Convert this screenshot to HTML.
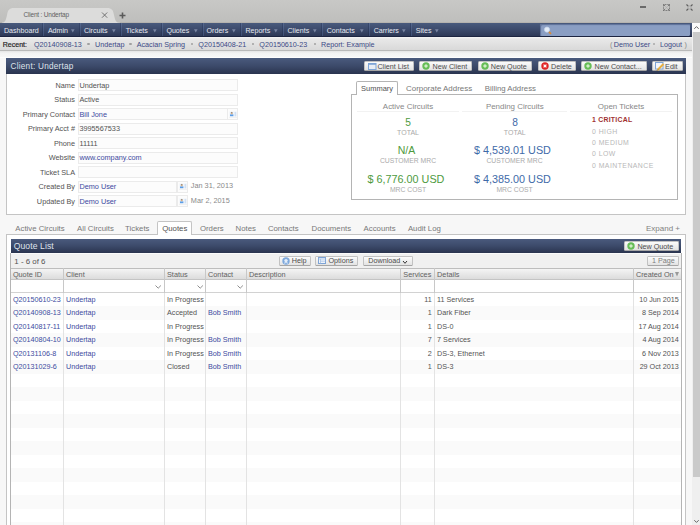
<!DOCTYPE html>
<html><head><meta charset="utf-8"><style>
html,body{margin:0;padding:0;width:700px;height:525px;overflow:hidden;background:#f4f4f4;}
body{position:relative;font-family:"Liberation Sans", sans-serif;}
body>div{position:absolute;}
.t{white-space:nowrap;}
svg{display:block;}
</style></head><body>
<div style="left:0px;top:0px;width:700px;height:23px;background:linear-gradient(#c8c8c6,#bebebc);"></div>
<svg style="position:absolute;left:0;top:0" width="140" height="23"><path d="M1 23 C5 23 6 20 7 15 C8 10 9 8 14 8 L107 8 C112 8 113 10 114 15 C115 20 116 23 120 23 Z" fill="#dcdcdb"/></svg>
<div class="t" style="left:23.5px;top:12px;font-size:6.5px;line-height:6.5px;color:#616161;font-weight:normal;letter-spacing:-0.2px;">Client : Undertap</div>
<svg style="position:absolute;left:100px;top:11px" width="9" height="9"><path d="M2 1.5 L7.2 6.7 M7.2 1.5 L2 6.7" stroke="#666" stroke-width="0.9"/></svg>
<svg style="position:absolute;left:118px;top:11px" width="9" height="9"><path d="M4.5 1.5 V7.5 M1.5 4.5 H7.5" stroke="#5a5a5a" stroke-width="1.6"/></svg>
<div style="left:640px;top:6px;width:6px;height:2px;background:#6a6a6a;"></div>
<svg style="position:absolute;left:662px;top:3px" width="9" height="9"><rect x="1.5" y="1.5" width="6" height="6" fill="none" stroke="#666" stroke-width="0.8" stroke-dasharray="1 0.6"/><path d="M1.5 1.5 L7.5 7.5 M7.5 1.5 L1.5 7.5" stroke="#aaa" stroke-width="0.6"/><path d="M1.5 1.5 L2.6 2.6 M7.5 1.5 L6.4 2.6 M1.5 7.5 L2.6 6.4 M7.5 7.5 L6.4 6.4" stroke="#555" stroke-width="1"/></svg>
<svg style="position:absolute;left:685px;top:3px" width="9" height="9"><path d="M1.5 1.5 L3.2 3.2 M7.5 1.5 L5.8 3.2 M1.5 7.5 L3.2 5.8 M7.5 7.5 L5.8 5.8" stroke="#555" stroke-width="1.1"/><rect x="3" y="3" width="3" height="3" fill="none" stroke="#999" stroke-width="0.6"/></svg>
<div style="left:0px;top:23px;width:692px;height:14px;background:linear-gradient(#495a7d,#3b496a 50%,#2b3653);"></div>
<div style="left:0px;top:36px;width:692px;height:1px;background:#1d2541;"></div>
<div style="left:120px;top:22px;width:572px;height:1px;background:#b5b3af;"></div>
<div style="left:0px;top:22px;width:2px;height:1px;background:#b5b3af;"></div>
<div style="left:42px;top:23px;width:1px;height:13px;background:linear-gradient(#3a4a70,#26324f);"></div>
<div style="left:43px;top:23px;width:1px;height:13px;background:linear-gradient(#56698f,#3e4e74);"></div>
<div style="left:79px;top:23px;width:1px;height:13px;background:linear-gradient(#3a4a70,#26324f);"></div>
<div style="left:80px;top:23px;width:1px;height:13px;background:linear-gradient(#56698f,#3e4e74);"></div>
<div style="left:120px;top:23px;width:1px;height:13px;background:linear-gradient(#3a4a70,#26324f);"></div>
<div style="left:121px;top:23px;width:1px;height:13px;background:linear-gradient(#56698f,#3e4e74);"></div>
<div style="left:161px;top:23px;width:1px;height:13px;background:linear-gradient(#3a4a70,#26324f);"></div>
<div style="left:162px;top:23px;width:1px;height:13px;background:linear-gradient(#56698f,#3e4e74);"></div>
<div style="left:202px;top:23px;width:1px;height:13px;background:linear-gradient(#3a4a70,#26324f);"></div>
<div style="left:203px;top:23px;width:1px;height:13px;background:linear-gradient(#56698f,#3e4e74);"></div>
<div style="left:240px;top:23px;width:1px;height:13px;background:linear-gradient(#3a4a70,#26324f);"></div>
<div style="left:241px;top:23px;width:1px;height:13px;background:linear-gradient(#56698f,#3e4e74);"></div>
<div style="left:282px;top:23px;width:1px;height:13px;background:linear-gradient(#3a4a70,#26324f);"></div>
<div style="left:283px;top:23px;width:1px;height:13px;background:linear-gradient(#56698f,#3e4e74);"></div>
<div style="left:321px;top:23px;width:1px;height:13px;background:linear-gradient(#3a4a70,#26324f);"></div>
<div style="left:322px;top:23px;width:1px;height:13px;background:linear-gradient(#56698f,#3e4e74);"></div>
<div style="left:368px;top:23px;width:1px;height:13px;background:linear-gradient(#3a4a70,#26324f);"></div>
<div style="left:369px;top:23px;width:1px;height:13px;background:linear-gradient(#56698f,#3e4e74);"></div>
<div style="left:410px;top:23px;width:1px;height:13px;background:linear-gradient(#3a4a70,#26324f);"></div>
<div style="left:411px;top:23px;width:1px;height:13px;background:linear-gradient(#56698f,#3e4e74);"></div>
<div class="t" style="left:4px;top:28px;font-size:7.1px;line-height:7.1px;color:#e6e9f0;font-weight:normal;">Dashboard</div>
<div class="t" style="left:47.9px;top:28px;font-size:7.1px;line-height:7.1px;color:#e6e9f0;font-weight:normal;">Admin</div>
<svg style="position:absolute;left:70.7px;top:29px" width="4" height="4"><path d="M0 0.2 H3.6 L1.8 3.4 Z" fill="#7a86a3"/></svg>
<div class="t" style="left:83.9px;top:28px;font-size:7.1px;line-height:7.1px;color:#e6e9f0;font-weight:normal;">Circuits</div>
<svg style="position:absolute;left:111.7px;top:29px" width="4" height="4"><path d="M0 0.2 H3.6 L1.8 3.4 Z" fill="#7a86a3"/></svg>
<div class="t" style="left:125.7px;top:28px;font-size:7.1px;line-height:7.1px;color:#e6e9f0;font-weight:normal;">Tickets</div>
<svg style="position:absolute;left:152.7px;top:29px" width="4" height="4"><path d="M0 0.2 H3.6 L1.8 3.4 Z" fill="#7a86a3"/></svg>
<div class="t" style="left:166.4px;top:28px;font-size:7.1px;line-height:7.1px;color:#e6e9f0;font-weight:normal;">Quotes</div>
<svg style="position:absolute;left:193.7px;top:29px" width="4" height="4"><path d="M0 0.2 H3.6 L1.8 3.4 Z" fill="#7a86a3"/></svg>
<div class="t" style="left:206.6px;top:28px;font-size:7.1px;line-height:7.1px;color:#e6e9f0;font-weight:normal;">Orders</div>
<svg style="position:absolute;left:231.7px;top:29px" width="4" height="4"><path d="M0 0.2 H3.6 L1.8 3.4 Z" fill="#7a86a3"/></svg>
<div class="t" style="left:245.4px;top:28px;font-size:7.1px;line-height:7.1px;color:#e6e9f0;font-weight:normal;">Reports</div>
<svg style="position:absolute;left:273.5px;top:29px" width="4" height="4"><path d="M0 0.2 H3.6 L1.8 3.4 Z" fill="#7a86a3"/></svg>
<div class="t" style="left:287.5px;top:28px;font-size:7.1px;line-height:7.1px;color:#e6e9f0;font-weight:normal;">Clients</div>
<svg style="position:absolute;left:312.7px;top:29px" width="4" height="4"><path d="M0 0.2 H3.6 L1.8 3.4 Z" fill="#7a86a3"/></svg>
<div class="t" style="left:326.7px;top:28px;font-size:7.1px;line-height:7.1px;color:#e6e9f0;font-weight:normal;">Contacts</div>
<svg style="position:absolute;left:359.7px;top:29px" width="4" height="4"><path d="M0 0.2 H3.6 L1.8 3.4 Z" fill="#7a86a3"/></svg>
<div class="t" style="left:373.7px;top:28px;font-size:7.1px;line-height:7.1px;color:#e6e9f0;font-weight:normal;">Carriers</div>
<svg style="position:absolute;left:401.7px;top:29px" width="4" height="4"><path d="M0 0.2 H3.6 L1.8 3.4 Z" fill="#7a86a3"/></svg>
<div class="t" style="left:415.7px;top:28px;font-size:7.1px;line-height:7.1px;color:#e6e9f0;font-weight:normal;">Sites</div>
<svg style="position:absolute;left:435.4px;top:29px" width="4" height="4"><path d="M0 0.2 H3.6 L1.8 3.4 Z" fill="#7a86a3"/></svg>
<div style="left:539.5px;top:24px;width:150px;height:11.5px;background:#8a9ec3;border-radius:1.5px;box-shadow:inset 1px 1px 1px #5d6f98;"></div>
<svg style="position:absolute;left:543px;top:25.5px" width="10" height="10"><circle cx="4" cy="3.6" r="2.6" fill="#e3ecf8" stroke="#c4d3ea" stroke-width="0.7"/><path d="M6 5.8 L8 7.8" stroke="#d68a38" stroke-width="1.7"/></svg>
<div style="left:0px;top:37px;width:692px;height:13px;background:linear-gradient(#f6f6f6,#e8e8e8 15%,#d9d9d9);"></div>
<div style="left:0px;top:50px;width:692px;height:1px;background:#b9b9b9;"></div>
<div class="t" style="left:2.8px;top:41px;font-size:7.0px;line-height:7.0px;color:#282828;font-weight:normal;-webkit-text-stroke:0.2px #222;">Recent:</div>
<div class="t" style="left:33.9px;top:41px;font-size:7.2px;line-height:7.2px;color:#3c4a86;font-weight:normal;">Q20140908-13</div>
<div class="t" style="left:95px;top:41px;font-size:7.2px;line-height:7.2px;color:#3c4a86;font-weight:normal;">Undertap</div>
<div class="t" style="left:136.7px;top:41px;font-size:7.2px;line-height:7.2px;color:#3c4a86;font-weight:normal;">Acacian Spring</div>
<div class="t" style="left:198.3px;top:41px;font-size:7.2px;line-height:7.2px;color:#3c4a86;font-weight:normal;">Q20150408-21</div>
<div class="t" style="left:259.3px;top:41px;font-size:7.2px;line-height:7.2px;color:#3c4a86;font-weight:normal;">Q20150610-23</div>
<div class="t" style="left:321px;top:41px;font-size:7.2px;line-height:7.2px;color:#3c4a86;font-weight:normal;">Report: Example</div>
<div style="left:87.3px;top:43px;width:2.4px;height:2.4px;background:#a0a0a0;border-radius:1.2px;"></div>
<div style="left:129.39999999999998px;top:43px;width:2.4px;height:2.4px;background:#a0a0a0;border-radius:1.2px;"></div>
<div style="left:190.5px;top:43px;width:2.4px;height:2.4px;background:#a0a0a0;border-radius:1.2px;"></div>
<div style="left:251.7px;top:43px;width:2.4px;height:2.4px;background:#a0a0a0;border-radius:1.2px;"></div>
<div style="left:313.7px;top:43px;width:2.4px;height:2.4px;background:#a0a0a0;border-radius:1.2px;"></div>
<div class="t" style="left:610px;top:41px;font-size:7.2px;line-height:7.2px;color:#888888;font-weight:normal;">(</div>
<div class="t" style="left:613.8px;top:41px;font-size:7.2px;line-height:7.2px;color:#3c4a86;font-weight:normal;">Demo User</div>
<div style="left:652.5px;top:43px;width:2.4px;height:2.4px;background:#a8a8a8;border-radius:1.2px;"></div>
<div class="t" style="left:660px;top:41px;font-size:7.2px;line-height:7.2px;color:#3c4a86;font-weight:normal;">Logout</div>
<div class="t" style="left:684.5px;top:41px;font-size:7.2px;line-height:7.2px;color:#888888;font-weight:normal;">)</div>
<div style="left:0px;top:51px;width:692px;height:474px;background:#f7f7f7;"></div>
<div style="left:0px;top:51px;width:692px;height:7px;background:linear-gradient(#e4e4e4,#f3f3f3 30%,#f8f8f8);"></div>
<div style="left:0px;top:57px;width:692px;height:1px;background:#fdfdfd;"></div>
<div style="left:692px;top:23px;width:8px;height:502px;background:#efefef;"></div>
<div style="left:692px;top:23px;width:8px;height:9px;background:#fafafa;"></div>
<svg style="position:absolute;left:693px;top:25px" width="7" height="5"><path d="M1.3 3.8 L3.5 1.6 L5.7 3.8" fill="none" stroke="#555" stroke-width="0.9"/></svg>
<div style="left:693px;top:32px;width:7px;height:445px;background:#cacaca;"></div>
<svg style="position:absolute;left:693px;top:519px" width="7" height="5"><path d="M1.3 1.2 L3.5 3.4 L5.7 1.2" fill="none" stroke="#555" stroke-width="0.9"/></svg>
<div style="left:6px;top:58px;width:680px;height:157px;background:#fff;box-sizing:border-box;border:1px solid #c4c4c4;border-top:none;"></div>
<div style="left:6px;top:58px;width:680px;height:16px;background:linear-gradient(#4a5a7d,#3c4a6a 50%,#2a344f);"></div>
<div class="t" style="left:10.5px;top:63px;font-size:8.2px;line-height:8.2px;color:#dfe3ec;font-weight:normal;letter-spacing:0.25px;">Client: Undertap</div>
<div style="left:356px;top:58px;width:330px;height:16px;background:linear-gradient(#4a5a7d,#3c4a6a 50%,#2a344f);"></div>
<div style="left:364.3px;top:60.8px;width:50.0px;height:10.400000000000006px;box-sizing:border-box;border:1px solid #c2c2c2;border-bottom-color:#a6a6a6;border-radius:1.5px;background:linear-gradient(#fbfbfb,#e3e3e3);"></div>
<svg style="position:absolute;left:367.8px;top:62.5px" width="9" height="7"><rect x="0.5" y="0.5" width="7.5" height="6" fill="#e8edf4" stroke="#7ea4d6" stroke-width="1"/><rect x="0.5" y="0.5" width="7.5" height="1.3" fill="#7ea4d6"/></svg>
<div class="t" style="left:377.40000000000003px;top:63px;font-size:7.2px;line-height:7.2px;color:#4c4c4c;font-weight:normal;">Client List</div>
<div style="left:419.4px;top:60.8px;width:52.700000000000045px;height:10.400000000000006px;box-sizing:border-box;border:1px solid #c2c2c2;border-bottom-color:#a6a6a6;border-radius:1.5px;background:linear-gradient(#fbfbfb,#e3e3e3);"></div>
<svg style="position:absolute;left:422.4px;top:62.0px" width="8" height="8"><circle cx="4" cy="4" r="3.7" fill="#66bd57"/><path d="M4 2.1 V5.9 M2.1 4 H5.9" stroke="#b9e4ad" stroke-width="1.3"/><circle cx="4" cy="4" r="0.8" fill="#f4fbf2"/></svg>
<div class="t" style="left:432.5px;top:63px;font-size:7.2px;line-height:7.2px;color:#4c4c4c;font-weight:normal;">New Client</div>
<div style="left:477.6px;top:60.8px;width:54.0px;height:10.400000000000006px;box-sizing:border-box;border:1px solid #c2c2c2;border-bottom-color:#a6a6a6;border-radius:1.5px;background:linear-gradient(#fbfbfb,#e3e3e3);"></div>
<svg style="position:absolute;left:480.6px;top:62.0px" width="8" height="8"><circle cx="4" cy="4" r="3.7" fill="#66bd57"/><path d="M4 2.1 V5.9 M2.1 4 H5.9" stroke="#b9e4ad" stroke-width="1.3"/><circle cx="4" cy="4" r="0.8" fill="#f4fbf2"/></svg>
<div class="t" style="left:490.70000000000005px;top:63px;font-size:7.2px;line-height:7.2px;color:#4c4c4c;font-weight:normal;">New Quote</div>
<div style="left:538px;top:60.8px;width:38.39999999999998px;height:10.400000000000006px;box-sizing:border-box;border:1px solid #c2c2c2;border-bottom-color:#a6a6a6;border-radius:1.5px;background:linear-gradient(#fbfbfb,#e3e3e3);"></div>
<svg style="position:absolute;left:541px;top:62.0px" width="8" height="8"><circle cx="4" cy="4" r="3.7" fill="#e02424"/><path d="M2.6 2.6 L5.4 5.4 M5.4 2.6 L2.6 5.4" stroke="#fff" stroke-width="1.2"/></svg>
<div class="t" style="left:551.1px;top:63px;font-size:7.2px;line-height:7.2px;color:#4c4c4c;font-weight:normal;">Delete</div>
<div style="left:581.4px;top:60.8px;width:65.20000000000005px;height:10.400000000000006px;box-sizing:border-box;border:1px solid #c2c2c2;border-bottom-color:#a6a6a6;border-radius:1.5px;background:linear-gradient(#fbfbfb,#e3e3e3);"></div>
<svg style="position:absolute;left:584.4px;top:62.0px" width="8" height="8"><circle cx="4" cy="4" r="3.7" fill="#66bd57"/><path d="M4 2.1 V5.9 M2.1 4 H5.9" stroke="#b9e4ad" stroke-width="1.3"/><circle cx="4" cy="4" r="0.8" fill="#f4fbf2"/></svg>
<div class="t" style="left:594.5px;top:63px;font-size:7.2px;line-height:7.2px;color:#4c4c4c;font-weight:normal;">New Contact...</div>
<div style="left:652px;top:60.8px;width:30.799999999999955px;height:10.400000000000006px;box-sizing:border-box;border:1px solid #c2c2c2;border-bottom-color:#a6a6a6;border-radius:1.5px;background:linear-gradient(#fbfbfb,#e3e3e3);"></div>
<svg style="position:absolute;left:655.3px;top:62.0px" width="10" height="9"><rect x="0.5" y="0.5" width="7.5" height="6.5" fill="#f3f6fb" stroke="#7ea4d6" stroke-width="1"/><path d="M2.5 8 L8.5 2" stroke="#e8b040" stroke-width="2"/><path d="M2 8.6 L3 7.6" stroke="#8a6a30" stroke-width="1"/></svg>
<div class="t" style="left:665.1px;top:63px;font-size:7.2px;line-height:7.2px;color:#4c4c4c;font-weight:normal;">Edit</div>
<div class="t" style="left:-325px;width:400px;text-align:right;top:82px;font-size:7.3px;line-height:7.3px;color:#535353;font-weight:normal;">Name</div>
<div style="left:78px;top:79.0px;width:160px;height:12px;box-sizing:border-box;border:1px solid #ebebeb;background:#fcfcfc;"></div>
<div class="t" style="left:79.4px;top:82px;font-size:7.3px;line-height:7.3px;color:#535353;font-weight:normal;">Undertap</div>
<div class="t" style="left:-325px;width:400px;text-align:right;top:96px;font-size:7.3px;line-height:7.3px;color:#535353;font-weight:normal;">Status</div>
<div style="left:78px;top:93.5px;width:160px;height:12px;box-sizing:border-box;border:1px solid #ebebeb;background:#fcfcfc;"></div>
<div class="t" style="left:79.4px;top:96px;font-size:7.3px;line-height:7.3px;color:#535353;font-weight:normal;">Active</div>
<div class="t" style="left:-325px;width:400px;text-align:right;top:111px;font-size:7.3px;line-height:7.3px;color:#535353;font-weight:normal;">Primary Contact</div>
<div style="left:78px;top:108.0px;width:160px;height:12px;box-sizing:border-box;border:1px solid #ebebeb;background:#fcfcfc;"></div>
<div style="left:227px;top:108.0px;width:11px;height:12px;box-sizing:border-box;border:1px solid #ebebeb;background:#fcfcfc;"></div>
<svg style="position:absolute;left:228.8px;top:110.5px" width="9" height="7"><rect x="0.2" y="0.5" width="7.6" height="5" fill="#f2f6fb"/><rect x="1" y="3.4" width="3.4" height="1.8" fill="#5a9de8"/><circle cx="2.7" cy="2.4" r="0.9" fill="#d8b088"/><path d="M1.7 1.9 Q2.7 1 3.7 1.9" stroke="#6a5a48" stroke-width="0.7" fill="none"/><rect x="5.6" y="0.9" width="1.6" height="4.4" fill="#d0e0f4"/><path d="M0.5 6.3 H7.5" stroke="#c8c8c8" stroke-width="0.5" stroke-dasharray="1 1"/></svg>
<div class="t" style="left:79.4px;top:111px;font-size:7.3px;line-height:7.3px;color:#3c4aa0;font-weight:normal;">Bill Jone</div>
<div class="t" style="left:-325px;width:400px;text-align:right;top:125px;font-size:7.3px;line-height:7.3px;color:#535353;font-weight:normal;">Primary Acct #</div>
<div style="left:78px;top:122.49999999999999px;width:160px;height:12px;box-sizing:border-box;border:1px solid #ebebeb;background:#fcfcfc;"></div>
<div class="t" style="left:79.4px;top:125px;font-size:7.3px;line-height:7.3px;color:#535353;font-weight:normal;">3995567533</div>
<div class="t" style="left:-325px;width:400px;text-align:right;top:140px;font-size:7.3px;line-height:7.3px;color:#535353;font-weight:normal;">Phone</div>
<div style="left:78px;top:137.0px;width:160px;height:12px;box-sizing:border-box;border:1px solid #ebebeb;background:#fcfcfc;"></div>
<div class="t" style="left:79.4px;top:140px;font-size:7.3px;line-height:7.3px;color:#535353;font-weight:normal;">11111</div>
<div class="t" style="left:-325px;width:400px;text-align:right;top:154px;font-size:7.3px;line-height:7.3px;color:#535353;font-weight:normal;">Website</div>
<div style="left:78px;top:151.5px;width:160px;height:12px;box-sizing:border-box;border:1px solid #ebebeb;background:#fcfcfc;"></div>
<div class="t" style="left:79.4px;top:154px;font-size:7.3px;line-height:7.3px;color:#3c4aa0;font-weight:normal;">www.company.com</div>
<div class="t" style="left:-325px;width:400px;text-align:right;top:169px;font-size:7.3px;line-height:7.3px;color:#535353;font-weight:normal;">Ticket SLA</div>
<div style="left:78px;top:166.0px;width:160px;height:12px;box-sizing:border-box;border:1px solid #ebebeb;background:#fcfcfc;"></div>
<div class="t" style="left:-325px;width:400px;text-align:right;top:183px;font-size:7.3px;line-height:7.3px;color:#535353;font-weight:normal;">Created By</div>
<div style="left:78px;top:180.5px;width:99px;height:12px;box-sizing:border-box;border:1px solid #ebebeb;background:#fcfcfc;"></div>
<div style="left:177px;top:180.5px;width:10.5px;height:12px;box-sizing:border-box;border:1px solid #ebebeb;background:#fcfcfc;"></div>
<svg style="position:absolute;left:178.5px;top:183.0px" width="9" height="7"><rect x="0.2" y="0.5" width="7.6" height="5" fill="#f2f6fb"/><rect x="1" y="3.4" width="3.4" height="1.8" fill="#5a9de8"/><circle cx="2.7" cy="2.4" r="0.9" fill="#d8b088"/><path d="M1.7 1.9 Q2.7 1 3.7 1.9" stroke="#6a5a48" stroke-width="0.7" fill="none"/><rect x="5.6" y="0.9" width="1.6" height="4.4" fill="#d0e0f4"/><path d="M0.5 6.3 H7.5" stroke="#c8c8c8" stroke-width="0.5" stroke-dasharray="1 1"/></svg>
<div class="t" style="left:190.8px;top:182px;font-size:7.3px;line-height:7.3px;color:#8a8a8a;font-weight:normal;">Jan 31, 2013</div>
<div class="t" style="left:79.4px;top:183px;font-size:7.3px;line-height:7.3px;color:#3c4aa0;font-weight:normal;">Demo User</div>
<div class="t" style="left:-325px;width:400px;text-align:right;top:198px;font-size:7.3px;line-height:7.3px;color:#535353;font-weight:normal;">Updated By</div>
<div style="left:78px;top:195.0px;width:99px;height:12px;box-sizing:border-box;border:1px solid #ebebeb;background:#fcfcfc;"></div>
<div style="left:177px;top:195.0px;width:10.5px;height:12px;box-sizing:border-box;border:1px solid #ebebeb;background:#fcfcfc;"></div>
<svg style="position:absolute;left:178.5px;top:197.5px" width="9" height="7"><rect x="0.2" y="0.5" width="7.6" height="5" fill="#f2f6fb"/><rect x="1" y="3.4" width="3.4" height="1.8" fill="#5a9de8"/><circle cx="2.7" cy="2.4" r="0.9" fill="#d8b088"/><path d="M1.7 1.9 Q2.7 1 3.7 1.9" stroke="#6a5a48" stroke-width="0.7" fill="none"/><rect x="5.6" y="0.9" width="1.6" height="4.4" fill="#d0e0f4"/><path d="M0.5 6.3 H7.5" stroke="#c8c8c8" stroke-width="0.5" stroke-dasharray="1 1"/></svg>
<div class="t" style="left:190.8px;top:197px;font-size:7.3px;line-height:7.3px;color:#8a8a8a;font-weight:normal;">Mar 2, 2015</div>
<div class="t" style="left:79.4px;top:198px;font-size:7.3px;line-height:7.3px;color:#3c4aa0;font-weight:normal;">Demo User</div>
<div style="left:351px;top:94px;width:327px;height:106px;box-sizing:border-box;border:1px solid #b4b4b4;background:#fff;"></div>
<div style="left:356.4px;top:81.4px;width:42px;height:13.6px;box-sizing:border-box;border:1px solid #b4b4b4;border-bottom:none;border-radius:2px 2px 0 0;background:#fff;"></div>
<div class="t" style="left:361px;top:85px;font-size:7.5px;line-height:7.5px;color:#535353;font-weight:normal;">Summary</div>
<div class="t" style="left:406px;top:85px;font-size:7.95px;line-height:7.95px;color:#777777;font-weight:normal;">Corporate Address</div>
<div class="t" style="left:484.8px;top:85px;font-size:7.8px;line-height:7.8px;color:#777777;font-weight:normal;">Billing Address</div>
<div class="t" style="left:208px;width:400px;text-align:center;top:103px;font-size:7.95px;line-height:7.95px;color:#888888;font-weight:normal;">Active Circuits</div>
<div class="t" style="left:314.79999999999995px;width:400px;text-align:center;top:103px;font-size:7.95px;line-height:7.95px;color:#888888;font-weight:normal;">Pending Circuits</div>
<div class="t" style="left:421px;width:400px;text-align:center;top:103px;font-size:7.95px;line-height:7.95px;color:#888888;font-weight:normal;">Open Tickets</div>
<div style="left:357px;top:111px;width:102px;height:1px;background:#f2f2f2;"></div>
<div style="left:462px;top:111px;width:105px;height:1px;background:#f2f2f2;"></div>
<div style="left:570px;top:111px;width:102px;height:1px;background:#f2f2f2;"></div>
<div class="t" style="left:208px;width:400px;text-align:center;top:118px;font-size:10.2px;line-height:10.2px;color:#4e9a3e;font-weight:normal;">5</div>
<div class="t" style="left:315px;width:400px;text-align:center;top:118px;font-size:10.2px;line-height:10.2px;color:#3e6aa8;font-weight:normal;">8</div>
<div class="t" style="left:208px;width:400px;text-align:center;top:129px;font-size:7.0px;line-height:7.0px;color:#aaaaaa;font-weight:normal;">TOTAL</div>
<div class="t" style="left:314.79999999999995px;width:400px;text-align:center;top:129px;font-size:7.0px;line-height:7.0px;color:#aaaaaa;font-weight:normal;">TOTAL</div>
<div class="t" style="left:206.5px;width:400px;text-align:center;top:145px;font-size:10.5px;line-height:10.5px;color:#4e9a3e;font-weight:normal;">N/A</div>
<div class="t" style="left:312.5px;width:400px;text-align:center;top:145px;font-size:10.8px;line-height:10.8px;color:#3e6aa8;font-weight:normal;">$ 4,539.01 USD</div>
<div class="t" style="left:208px;width:400px;text-align:center;top:158px;font-size:6.8px;line-height:6.8px;color:#aaaaaa;font-weight:normal;">CUSTOMER MRC</div>
<div class="t" style="left:314.5px;width:400px;text-align:center;top:158px;font-size:6.8px;line-height:6.8px;color:#aaaaaa;font-weight:normal;">CUSTOMER MRC</div>
<div class="t" style="left:206px;width:400px;text-align:center;top:174px;font-size:10.8px;line-height:10.8px;color:#4e9a3e;font-weight:normal;">$ 6,776.00 USD</div>
<div class="t" style="left:312.5px;width:400px;text-align:center;top:174px;font-size:10.8px;line-height:10.8px;color:#3e6aa8;font-weight:normal;">$ 4,385.00 USD</div>
<div class="t" style="left:208px;width:400px;text-align:center;top:187px;font-size:6.8px;line-height:6.8px;color:#aaaaaa;font-weight:normal;">MRC COST</div>
<div class="t" style="left:314.5px;width:400px;text-align:center;top:187px;font-size:6.8px;line-height:6.8px;color:#aaaaaa;font-weight:normal;">MRC COST</div>
<div class="t" style="left:592px;top:117px;font-size:6.9px;line-height:6.9px;color:#a03030;font-weight:bold;letter-spacing:0.25px;">1 CRITICAL</div>
<div class="t" style="left:592px;top:129px;font-size:6.9px;line-height:6.9px;color:#b8b8b8;font-weight:normal;letter-spacing:0.45px;">0 HIGH</div>
<div class="t" style="left:592px;top:140px;font-size:6.9px;line-height:6.9px;color:#b8b8b8;font-weight:normal;letter-spacing:0.45px;">0 MEDIUM</div>
<div class="t" style="left:592px;top:151px;font-size:6.9px;line-height:6.9px;color:#b8b8b8;font-weight:normal;letter-spacing:0.45px;">0 LOW</div>
<div class="t" style="left:592px;top:163px;font-size:6.9px;line-height:6.9px;color:#b8b8b8;font-weight:normal;letter-spacing:0.45px;">0 MAINTENANCE</div>
<div style="left:6px;top:234px;width:680px;height:291px;box-sizing:border-box;border:1px solid #c4c4c4;border-bottom:none;background:#fff;"></div>
<div style="left:157.1px;top:221.4px;width:35px;height:13.6px;box-sizing:border-box;border:1px solid #c4c4c4;border-bottom:none;border-radius:2px 2px 0 0;background:#fff;"></div>
<div class="t" style="left:15.3px;top:225px;font-size:7.8px;line-height:7.8px;color:#777777;font-weight:normal;">Active Circuits</div>
<div class="t" style="left:77px;top:225px;font-size:7.8px;line-height:7.8px;color:#777777;font-weight:normal;">All Circuits</div>
<div class="t" style="left:125.1px;top:225px;font-size:7.8px;line-height:7.8px;color:#777777;font-weight:normal;">Tickets</div>
<div class="t" style="left:162.2px;top:225px;font-size:7.8px;line-height:7.8px;color:#535353;font-weight:normal;">Quotes</div>
<div class="t" style="left:199.9px;top:225px;font-size:7.8px;line-height:7.8px;color:#777777;font-weight:normal;">Orders</div>
<div class="t" style="left:235.5px;top:225px;font-size:7.8px;line-height:7.8px;color:#777777;font-weight:normal;">Notes</div>
<div class="t" style="left:267.9px;top:225px;font-size:7.8px;line-height:7.8px;color:#777777;font-weight:normal;">Contacts</div>
<div class="t" style="left:311.6px;top:225px;font-size:7.8px;line-height:7.8px;color:#777777;font-weight:normal;">Documents</div>
<div class="t" style="left:363.6px;top:225px;font-size:7.8px;line-height:7.8px;color:#777777;font-weight:normal;">Accounts</div>
<div class="t" style="left:407.9px;top:225px;font-size:7.8px;line-height:7.8px;color:#777777;font-weight:normal;">Audit Log</div>
<div class="t" style="left:280px;width:400px;text-align:right;top:225px;font-size:8.0px;line-height:8.0px;color:#818181;font-weight:normal;">Expand +</div>
<div style="left:10.5px;top:238.6px;width:670.7px;height:14.4px;background:linear-gradient(#4a5a7d,#3c4a6a 50%,#2a344f);"></div>
<div class="t" style="left:13.7px;top:242px;font-size:8.6px;line-height:8.6px;color:#dfe3ec;font-weight:normal;letter-spacing:0.1px;">Quote List</div>
<div style="left:624.3px;top:240.7px;width:54.700000000000045px;height:10.300000000000011px;box-sizing:border-box;border:1px solid #c2c2c2;border-bottom-color:#a6a6a6;border-radius:1.5px;background:linear-gradient(#fbfbfb,#e3e3e3);"></div>
<svg style="position:absolute;left:627.3px;top:241.85px" width="8" height="8"><circle cx="4" cy="4" r="3.7" fill="#66bd57"/><path d="M4 2.1 V5.9 M2.1 4 H5.9" stroke="#b9e4ad" stroke-width="1.3"/><circle cx="4" cy="4" r="0.8" fill="#f4fbf2"/></svg>
<div class="t" style="left:637.4px;top:243px;font-size:7.2px;line-height:7.2px;color:#4c4c4c;font-weight:normal;">New Quote</div>
<div style="left:10.5px;top:253px;width:670.7px;height:14.6px;background:#f0f0f0;"></div>
<div style="left:10.5px;top:253px;width:670.7px;height:1px;background:#fafafa;"></div>
<div class="t" style="left:14.3px;top:258px;font-size:7.9px;line-height:7.9px;color:#535353;font-weight:normal;">1 - 6 of 6</div>
<div style="left:278.7px;top:255.6px;width:31.900000000000034px;height:10.000000000000028px;box-sizing:border-box;border:1px solid #c2c2c2;border-bottom-color:#a6a6a6;border-radius:1.5px;background:linear-gradient(#fbfbfb,#e3e3e3);"></div>
<svg style="position:absolute;left:281.7px;top:256.6px" width="8" height="8"><circle cx="4" cy="4" r="3.7" fill="#7da8dc"/><circle cx="4" cy="3.6" r="1.7" fill="#e4eef9"/><path d="M2 6.2 Q4 4.8 6 6.2" stroke="#e4eef9" stroke-width="0.9" fill="none"/></svg>
<div class="t" style="left:291.8px;top:257px;font-size:7.2px;line-height:7.2px;color:#4c4c4c;font-weight:normal;">Help</div>
<div style="left:315.4px;top:255.6px;width:42.400000000000034px;height:10.000000000000028px;box-sizing:border-box;border:1px solid #c2c2c2;border-bottom-color:#a6a6a6;border-radius:1.5px;background:linear-gradient(#fbfbfb,#e3e3e3);"></div>
<svg style="position:absolute;left:318.4px;top:257.1px" width="9" height="7"><rect x="0.5" y="0.5" width="7" height="6" fill="#eef3fb" stroke="#7ea4d6" stroke-width="1"/><path d="M0.5 2 H7.5 M2.5 2 V6.5 M2.5 4.2 H7.5" stroke="#9dbbe2" stroke-width="0.7"/></svg>
<div class="t" style="left:328.5px;top:257px;font-size:7.2px;line-height:7.2px;color:#4c4c4c;font-weight:normal;">Options</div>
<div style="left:363.1px;top:255.6px;width:50.39999999999998px;height:10.000000000000028px;box-sizing:border-box;border:1px solid #c2c2c2;border-bottom-color:#a6a6a6;border-radius:1.5px;background:linear-gradient(#fbfbfb,#e3e3e3);"></div>
<div class="t" style="left:368.3px;top:257px;font-size:7.2px;line-height:7.2px;color:#4c4c4c;font-weight:normal;">Download</div>
<svg style="position:absolute;left:402px;top:260px" width="6" height="5"><path d="M1 1 L3 3.3 L5 1" fill="none" stroke="#333" stroke-width="1"/></svg>
<div style="left:647.4px;top:255.6px;width:31.600000000000023px;height:10.000000000000028px;box-sizing:border-box;border:1px solid #c2c2c2;border-bottom-color:#a6a6a6;border-radius:1.5px;background:linear-gradient(#fbfbfb,#e3e3e3);"></div>
<div class="t" style="left:651.9px;top:257px;font-size:7.2px;line-height:7.2px;color:#7e7e7e;font-weight:normal;">1 Page</div>
<div style="left:10.5px;top:267.6px;width:670.7px;height:12px;background:linear-gradient(#f4f4f4,#dcdcdc);border-top:1px solid #bdbdbd;border-bottom:1px solid #c4c4c4;box-sizing:border-box;"></div>
<div style="left:10.5px;top:279.6px;width:670.7px;height:245.4px;background:#fff;"></div>
<div style="left:10.5px;top:306.0px;width:670.7px;height:13.5px;background:#fafafa;"></div>
<div style="left:10.5px;top:333.0px;width:670.7px;height:13.5px;background:#fafafa;"></div>
<div style="left:10.5px;top:360.0px;width:670.7px;height:13.5px;background:#fafafa;"></div>
<div style="left:10.5px;top:387.0px;width:670.7px;height:13.5px;background:#fafafa;"></div>
<div style="left:10.5px;top:414.0px;width:670.7px;height:13.5px;background:#fafafa;"></div>
<div style="left:10.5px;top:441.0px;width:670.7px;height:13.5px;background:#fafafa;"></div>
<div style="left:10.5px;top:468.0px;width:670.7px;height:13.5px;background:#fafafa;"></div>
<div style="left:10.5px;top:495.0px;width:670.7px;height:13.5px;background:#fafafa;"></div>
<div style="left:10.5px;top:522.0px;width:670.7px;height:13.5px;background:#fafafa;"></div>
<div style="left:10.5px;top:292px;width:670.7px;height:1px;background:#d2d2d2;"></div>
<div style="left:62.8px;top:267.6px;width:1px;height:257.4px;background:#e3e3e3;"></div>
<div style="left:62.8px;top:267.6px;width:1px;height:25px;background:#c8c8c8;"></div>
<div style="left:163.9px;top:267.6px;width:1px;height:257.4px;background:#e3e3e3;"></div>
<div style="left:163.9px;top:267.6px;width:1px;height:25px;background:#c8c8c8;"></div>
<div style="left:205.1px;top:267.6px;width:1px;height:257.4px;background:#e3e3e3;"></div>
<div style="left:205.1px;top:267.6px;width:1px;height:25px;background:#c8c8c8;"></div>
<div style="left:246.1px;top:267.6px;width:1px;height:257.4px;background:#e3e3e3;"></div>
<div style="left:246.1px;top:267.6px;width:1px;height:25px;background:#c8c8c8;"></div>
<div style="left:399.9px;top:267.6px;width:1px;height:257.4px;background:#e3e3e3;"></div>
<div style="left:399.9px;top:267.6px;width:1px;height:25px;background:#c8c8c8;"></div>
<div style="left:434.0px;top:267.6px;width:1px;height:257.4px;background:#e3e3e3;"></div>
<div style="left:434.0px;top:267.6px;width:1px;height:25px;background:#c8c8c8;"></div>
<div style="left:633.1px;top:267.6px;width:1px;height:257.4px;background:#e3e3e3;"></div>
<div style="left:633.1px;top:267.6px;width:1px;height:25px;background:#c8c8c8;"></div>
<div style="left:10px;top:253px;width:1px;height:272px;background:#b4b4b4;"></div>
<div style="left:681px;top:253px;width:1px;height:272px;background:#b4b4b4;"></div>
<div class="t" style="left:12.9px;top:271px;font-size:7.3px;line-height:7.3px;color:#616161;font-weight:normal;">Quote ID</div>
<div class="t" style="left:66px;top:271px;font-size:7.3px;line-height:7.3px;color:#616161;font-weight:normal;">Client</div>
<div class="t" style="left:167px;top:271px;font-size:7.3px;line-height:7.3px;color:#616161;font-weight:normal;">Status</div>
<div class="t" style="left:208px;top:271px;font-size:7.3px;line-height:7.3px;color:#616161;font-weight:normal;">Contact</div>
<div class="t" style="left:249px;top:271px;font-size:7.3px;line-height:7.3px;color:#616161;font-weight:normal;">Description</div>
<div class="t" style="left:403.3px;top:271px;font-size:7.3px;line-height:7.3px;color:#616161;font-weight:normal;">Services</div>
<div class="t" style="left:437.1px;top:271px;font-size:7.3px;line-height:7.3px;color:#616161;font-weight:normal;">Details</div>
<div class="t" style="left:635.9px;top:271px;font-size:7.3px;line-height:7.3px;color:#616161;font-weight:normal;">Created On</div>
<svg style="position:absolute;left:675px;top:271.5px" width="5" height="5"><path d="M0 0 H4 L2 4.5 Z" fill="#999"/></svg>
<svg style="position:absolute;left:155.20000000000002px;top:285px" width="7" height="4"><path d="M0.5 0.5 L3.2 3.2 L5.9 0.5" fill="none" stroke="#808080" stroke-width="0.9"/></svg>
<svg style="position:absolute;left:196.8px;top:285px" width="7" height="4"><path d="M0.5 0.5 L3.2 3.2 L5.9 0.5" fill="none" stroke="#808080" stroke-width="0.9"/></svg>
<svg style="position:absolute;left:237.20000000000002px;top:285px" width="7" height="4"><path d="M0.5 0.5 L3.2 3.2 L5.9 0.5" fill="none" stroke="#808080" stroke-width="0.9"/></svg>
<div class="t" style="left:12.9px;top:296px;font-size:7.2px;line-height:7.2px;color:#3c4aa0;font-weight:normal;">Q20150610-23</div>
<div class="t" style="left:66px;top:296px;font-size:7.2px;line-height:7.2px;color:#3c4aa0;font-weight:normal;">Undertap</div>
<div class="t" style="left:167px;top:296px;font-size:7.2px;line-height:7.2px;color:#535353;font-weight:normal;">In Progress</div>
<div class="t" style="left:31.80000000000001px;width:400px;text-align:right;top:296px;font-size:7.2px;line-height:7.2px;color:#535353;font-weight:normal;">11</div>
<div class="t" style="left:437.1px;top:296px;font-size:7.2px;line-height:7.2px;color:#535353;font-weight:normal;">11 Services</div>
<div class="t" style="left:278.79999999999995px;width:400px;text-align:right;top:296px;font-size:7.2px;line-height:7.2px;color:#535353;font-weight:normal;">10 Jun 2015</div>
<div class="t" style="left:12.9px;top:309px;font-size:7.2px;line-height:7.2px;color:#3c4aa0;font-weight:normal;">Q20140908-13</div>
<div class="t" style="left:66px;top:309px;font-size:7.2px;line-height:7.2px;color:#3c4aa0;font-weight:normal;">Undertap</div>
<div class="t" style="left:167px;top:309px;font-size:7.2px;line-height:7.2px;color:#535353;font-weight:normal;">Accepted</div>
<div class="t" style="left:208px;top:309px;font-size:7.2px;line-height:7.2px;color:#3c4aa0;font-weight:normal;">Bob Smith</div>
<div class="t" style="left:31.80000000000001px;width:400px;text-align:right;top:309px;font-size:7.2px;line-height:7.2px;color:#535353;font-weight:normal;">1</div>
<div class="t" style="left:437.1px;top:309px;font-size:7.2px;line-height:7.2px;color:#535353;font-weight:normal;">Dark Fiber</div>
<div class="t" style="left:278.79999999999995px;width:400px;text-align:right;top:309px;font-size:7.2px;line-height:7.2px;color:#535353;font-weight:normal;">8 Sep 2014</div>
<div class="t" style="left:12.9px;top:323px;font-size:7.2px;line-height:7.2px;color:#3c4aa0;font-weight:normal;">Q20140817-11</div>
<div class="t" style="left:66px;top:323px;font-size:7.2px;line-height:7.2px;color:#3c4aa0;font-weight:normal;">Undertap</div>
<div class="t" style="left:167px;top:323px;font-size:7.2px;line-height:7.2px;color:#535353;font-weight:normal;">In Progress</div>
<div class="t" style="left:31.80000000000001px;width:400px;text-align:right;top:323px;font-size:7.2px;line-height:7.2px;color:#535353;font-weight:normal;">1</div>
<div class="t" style="left:437.1px;top:323px;font-size:7.2px;line-height:7.2px;color:#535353;font-weight:normal;">DS-0</div>
<div class="t" style="left:278.79999999999995px;width:400px;text-align:right;top:323px;font-size:7.2px;line-height:7.2px;color:#535353;font-weight:normal;">17 Aug 2014</div>
<div class="t" style="left:12.9px;top:336px;font-size:7.2px;line-height:7.2px;color:#3c4aa0;font-weight:normal;">Q20140804-10</div>
<div class="t" style="left:66px;top:336px;font-size:7.2px;line-height:7.2px;color:#3c4aa0;font-weight:normal;">Undertap</div>
<div class="t" style="left:167px;top:336px;font-size:7.2px;line-height:7.2px;color:#535353;font-weight:normal;">In Progress</div>
<div class="t" style="left:208px;top:336px;font-size:7.2px;line-height:7.2px;color:#3c4aa0;font-weight:normal;">Bob Smith</div>
<div class="t" style="left:31.80000000000001px;width:400px;text-align:right;top:336px;font-size:7.2px;line-height:7.2px;color:#535353;font-weight:normal;">7</div>
<div class="t" style="left:437.1px;top:336px;font-size:7.2px;line-height:7.2px;color:#535353;font-weight:normal;">7 Services</div>
<div class="t" style="left:278.79999999999995px;width:400px;text-align:right;top:336px;font-size:7.2px;line-height:7.2px;color:#535353;font-weight:normal;">4 Aug 2014</div>
<div class="t" style="left:12.9px;top:350px;font-size:7.2px;line-height:7.2px;color:#3c4aa0;font-weight:normal;">Q20131106-8</div>
<div class="t" style="left:66px;top:350px;font-size:7.2px;line-height:7.2px;color:#3c4aa0;font-weight:normal;">Undertap</div>
<div class="t" style="left:167px;top:350px;font-size:7.2px;line-height:7.2px;color:#535353;font-weight:normal;">In Progress</div>
<div class="t" style="left:208px;top:350px;font-size:7.2px;line-height:7.2px;color:#3c4aa0;font-weight:normal;">Bob Smith</div>
<div class="t" style="left:31.80000000000001px;width:400px;text-align:right;top:350px;font-size:7.2px;line-height:7.2px;color:#535353;font-weight:normal;">2</div>
<div class="t" style="left:437.1px;top:350px;font-size:7.2px;line-height:7.2px;color:#535353;font-weight:normal;">DS-3, Ethernet</div>
<div class="t" style="left:278.79999999999995px;width:400px;text-align:right;top:350px;font-size:7.2px;line-height:7.2px;color:#535353;font-weight:normal;">6 Nov 2013</div>
<div class="t" style="left:12.9px;top:363px;font-size:7.2px;line-height:7.2px;color:#3c4aa0;font-weight:normal;">Q20131029-6</div>
<div class="t" style="left:66px;top:363px;font-size:7.2px;line-height:7.2px;color:#3c4aa0;font-weight:normal;">Undertap</div>
<div class="t" style="left:167px;top:363px;font-size:7.2px;line-height:7.2px;color:#535353;font-weight:normal;">Closed</div>
<div class="t" style="left:208px;top:363px;font-size:7.2px;line-height:7.2px;color:#3c4aa0;font-weight:normal;">Bob Smith</div>
<div class="t" style="left:31.80000000000001px;width:400px;text-align:right;top:363px;font-size:7.2px;line-height:7.2px;color:#535353;font-weight:normal;">1</div>
<div class="t" style="left:437.1px;top:363px;font-size:7.2px;line-height:7.2px;color:#535353;font-weight:normal;">DS-3</div>
<div class="t" style="left:278.79999999999995px;width:400px;text-align:right;top:363px;font-size:7.2px;line-height:7.2px;color:#535353;font-weight:normal;">29 Oct 2013</div>
</body></html>
